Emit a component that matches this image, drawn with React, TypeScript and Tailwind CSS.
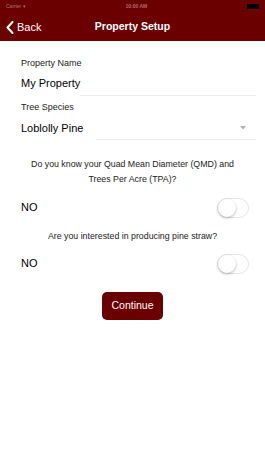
import React from "react";

function Toggle() {
  return (
    <div className="relative w-[32px] h-[20px] rounded-full border border-[#e6e6e6] bg-white">
      <div className="absolute left-0 top-0 w-[18px] h-[18px] rounded-full bg-white shadow-[0_1px_3px_rgba(0,0,0,0.3)]" />
    </div>
  );
}

export default function App() {
  return (
    <div className="w-[265px] h-[471px] bg-white font-['Liberation_Sans',Arial,sans-serif] text-black">
      <div className="bg-[#6b0000] text-white">
        <div className="h-[13px] flex items-center justify-between px-[6px] text-[5px]">
          <span className="opacity-40">Carrier ▾</span>
          <span className="opacity-40 font-bold">10:00 AM</span>
          <span className="w-[12px] h-[5px] bg-black rounded-[1px]" />
        </div>
        <div className="relative h-[28px] flex items-center">
          <div className="flex items-center pl-[6px] gap-[3px]">
            <svg width="8" height="13" viewBox="0 0 8 13">
              <path d="M6.5 1 L1.5 6.5 L6.5 12" stroke="white" strokeWidth="2" fill="none" strokeLinecap="round" strokeLinejoin="round" />
            </svg>
            <span className="text-[11px]">Back</span>
          </div>
          <div className="absolute inset-0 flex items-center justify-center text-[10.5px] font-bold pointer-events-none">
            Property Setup
          </div>
        </div>
      </div>

      <div className="px-[21px] pt-[16.5px]">
        <div className="text-[9px] leading-[11px] text-[#222]">Property Name</div>
        <div className="text-[11px] leading-[16px] mt-[6.5px]">My Property</div>
        <div className="h-px bg-[#ececec] mt-[4px] ml-[59px] -mr-[12px]" />

        <div className="text-[9px] leading-[11px] text-[#222] mt-[5.5px]">Tree Species</div>
        <div className="flex items-center justify-between mt-[7.5px]">
          <span className="text-[11px] leading-[16px]">Loblolly Pine</span>
          <svg width="6" height="4" viewBox="0 0 6 4" className="mr-[-2px]">
            <path d="M0 0 L6 0 L3 3.5 Z" fill="#b0b0b0" />
          </svg>
        </div>
        <div className="h-px bg-[#ececec] mt-[3px] ml-[75px] -mr-[12px]" />
      </div>

      <div className="text-center text-[8.8px] leading-[15px] text-[#222] mt-[16.5px]">
        Do you know your Quad Mean Diameter (QMD) and
        <br />
        Trees Per Acre (TPA)?
      </div>
      <div className="flex items-center justify-between pl-[21px] pr-[16px] mt-[11px]">
        <span className="text-[11px]">NO</span>
        <Toggle />
      </div>

      <div className="text-center text-[8.8px] leading-[15px] text-[#222] mt-[11px]">
        Are you interested in producing pine straw?
      </div>
      <div className="flex items-center justify-between pl-[21px] pr-[16px] mt-[10px]">
        <span className="text-[11px]">NO</span>
        <Toggle />
      </div>

      <div className="flex justify-center mt-[18.5px]">
        <button className="w-[61px] h-[28px] rounded-[5px] bg-[#6b0000] text-white text-[10.5px]">
          Continue
        </button>
      </div>
    </div>
  );
}
